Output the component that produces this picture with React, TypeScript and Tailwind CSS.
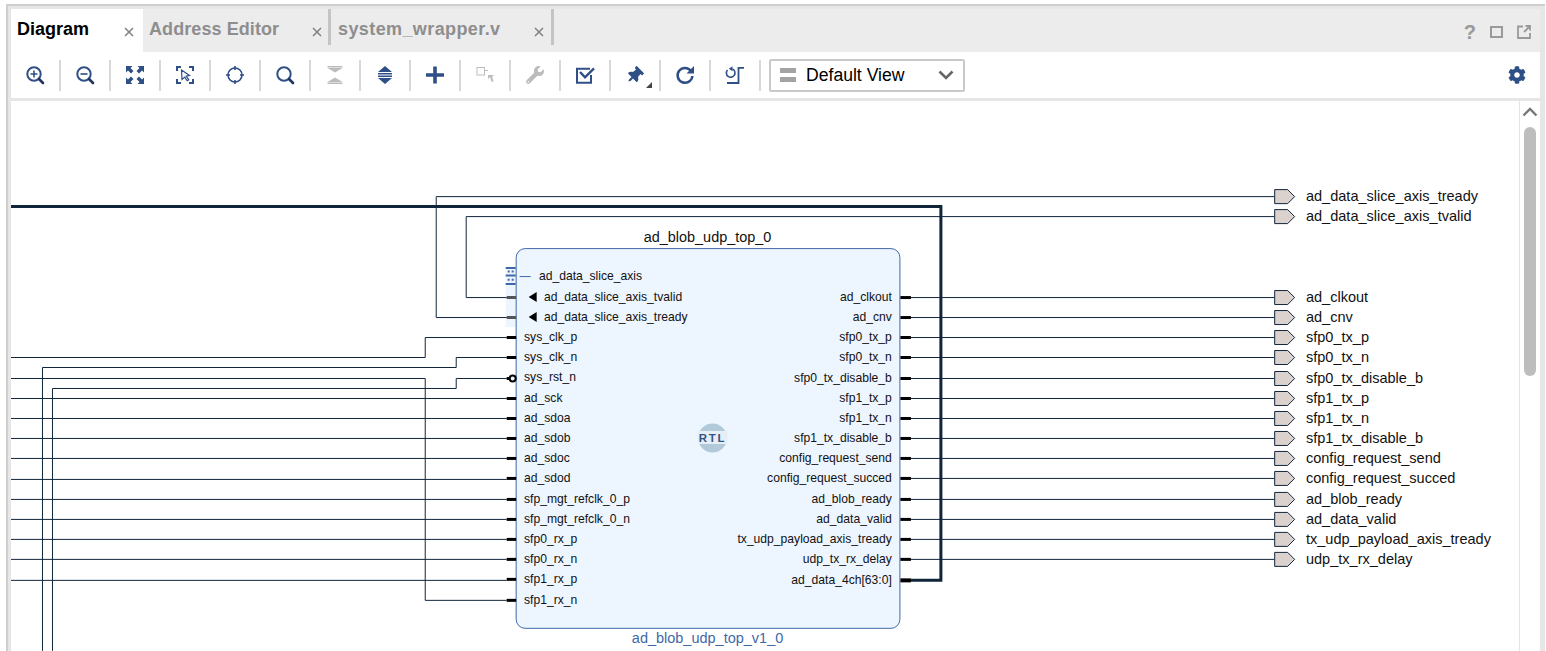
import { FaCog, FaThumbtack, FaWrench } from "react-icons/fa";

const BLUE = "#2f4f87";
const GREY = "#bcbcbc";
const WIRE = "#10243a";

const inputs = [
  { name: "sys_clk_p", y: 337 },
  { name: "sys_clk_n", y: 357 },
  { name: "sys_rst_n", y: 378, dy: -1 },
  { name: "ad_sck", y: 398 },
  { name: "ad_sdoa", y: 418 },
  { name: "ad_sdob", y: 438 },
  { name: "ad_sdoc", y: 458 },
  { name: "ad_sdod", y: 478 },
  { name: "sfp_mgt_refclk_0_p", y: 499 },
  { name: "sfp_mgt_refclk_0_n", y: 519 },
  { name: "sfp0_rx_p", y: 539 },
  { name: "sfp0_rx_n", y: 559 },
  { name: "sfp1_rx_p", y: 579 },
  { name: "sfp1_rx_n", y: 600 },
];

const outputs = [
  { name: "ad_clkout", y: 297 },
  { name: "ad_cnv", y: 317 },
  { name: "sfp0_tx_p", y: 337 },
  { name: "sfp0_tx_n", y: 357 },
  { name: "sfp0_tx_disable_b", y: 378 },
  { name: "sfp1_tx_p", y: 398 },
  { name: "sfp1_tx_n", y: 418 },
  { name: "sfp1_tx_disable_b", y: 438 },
  { name: "config_request_send", y: 458 },
  { name: "config_request_succed", y: 478 },
  { name: "ad_blob_ready", y: 499 },
  { name: "ad_data_valid", y: 519 },
  { name: "tx_udp_payload_axis_tready", y: 539 },
  { name: "udp_tx_rx_delay", y: 559 },
];

// wires on the left of the block, in page pixels
const leftWires = [
  "M11 357.5H425.5V337.5H507",
  "M42.5 651V367.5H456.5V357.5H507",
  "M52.5 651V388.5H456.5V378.5H507",
  "M11 378.5H425.5V600.5H507",
  "M11 398.5H507",
  "M11 418.5H507",
  "M11 438.5H507",
  "M11 458.5H507",
  "M11 479.5H507",
  "M11 499.5H507",
  "M11 519.5H507",
  "M11 539.5H507",
  "M11 559.5H507",
  "M11 580.5H507",
];

function Ico({ children }: { children: React.ReactNode }) {
  return (
    <svg width="20" height="20" viewBox="0 0 20 20" fill="none">
      {children}
    </svg>
  );
}

function Lens({ inner }: { inner?: React.ReactNode }) {
  return (
    <Ico>
      <circle cx="9" cy="9" r="6.7" stroke={BLUE} strokeWidth="2" />
      <path d="M14 14l4 4" stroke="#1e3560" strokeWidth="2.6" strokeLinecap="round" />
      {inner}
    </Ico>
  );
}

const tools: React.ReactNode[] = [
  <Lens inner={<path d="M5.5 9h7M9 5.5v7" stroke={BLUE} strokeWidth="1.6" />} />,
  <Lens inner={<path d="M5.5 9h7" stroke={BLUE} strokeWidth="1.6" />} />,
  <Ico>
    <path d="M1 1h6.500L5.500 3l3 3-2.500 2.500-3-3-2 2zM19 1v6.500l-2-2-3 3L11.500 6l3-3-2-2zM1 19v-6.500l2 2 3-3L8.500 14l-3 3 2 2zM19 19h-6.500l2-2-3-3 2.500-2.500 3 3 2-2z" fill={BLUE} />
  </Ico>,
  <Ico>
    <path d="M6 2H2V6M14 2h4V6M2 14v4H6M14 18h4V14" stroke={BLUE} strokeWidth="2" />
    <path d="M6.500 5l8 5.500-3.300.6 2.600 3.700-1.600 1-2.500-3.700L7 14.500z" fill="white" stroke={BLUE} strokeWidth="1.200" />
  </Ico>,
  <Ico>
    <circle cx="10" cy="10" r="7" stroke={BLUE} strokeWidth="1.600" />
    <path d="M10 1v4M10 15v4M1 10h4M15 10h4" stroke={BLUE} strokeWidth="1.600" />
  </Ico>,
  <Lens />,
  <Ico>
    <path d="M2.500 1.800h15M2.500 18.200h15" stroke={GREY} strokeWidth="1.600" />
    <path d="M2.500 3h15L10 7.500zM2.500 17h15L10 12.500z" fill={GREY} />
  </Ico>,
  <Ico>
    <path d="M10 1l7 6H3zM10 19l7-6H3z" fill={BLUE} />
    <path d="M3 8.800h14M3 11.200h14" stroke={BLUE} strokeWidth="1.600" />
  </Ico>,
  <Ico>
    <path d="M10 1.500v17M1 10h18" stroke={BLUE} strokeWidth="3.600" />
  </Ico>,
  <Ico>
    <rect x="2" y="2.500" width="7.500" height="7.500" stroke={GREY} fill="white" />
    <path d="M9.500 5.500h3.500" stroke={GREY} />
    <path d="M13 10h6l-1.800 1.800 1.300 5h-2l-1.300-4.700L13 14z" fill={GREY} />
  </Ico>,
  <FaWrench size={18} color={GREY} />,
  <Ico>
    <path d="M16 10v7.700H2V3.700h13" stroke={BLUE} strokeWidth="2" />
    <path d="M5 7l5 5.300L19 3.300" stroke={BLUE} strokeWidth="2.400" />
  </Ico>,
  <div className="relative mr-[2px]">
    <FaThumbtack size={17} color={BLUE} style={{ transform: "rotate(45deg)" }} />
    <div className="absolute left-[20px] top-[15px] h-0 w-0 border-b-[6px] border-l-[6px] border-b-[#444] border-l-transparent" />
  </div>,
  <Ico>
    <path d="M16 6A7.400 7.400 0 1 0 17.400 11" stroke={BLUE} strokeWidth="2.500" />
    <path d="M19 1v7.500h-7.500z" fill={BLUE} />
  </Ico>,
  <Ico>
    <path d="M7.500 4A4.300 4.300 0 1 1 2.500 5" stroke={BLUE} strokeWidth="1.600" />
    <path d="M7.500 1.200v5L3.800 3.700z" fill={BLUE} />
    <path d="M19 2.800h-5.500V18H2" stroke={BLUE} strokeWidth="1.800" />
  </Ico>,
];

function Close() {
  return (
    <svg width="10" height="10" viewBox="0 0 10 10" className="mt-[3px] shrink-0">
      <path d="M1 1l8 8M9 1l-8 8" stroke="#808080" strokeWidth="1.500" />
    </svg>
  );
}

function Tabs() {
  return (
    <div className="flex h-[43px] items-stretch bg-[#ececec]">
      <div className="flex w-[132px] items-center justify-between bg-white pl-[6px] pr-[9px] text-[18px] font-bold text-black">
        <span className="mb-[3px]">Diagram</span>
        <Close />
      </div>
      <div className="flex w-[185px] items-center justify-between pl-[6px] pr-[6px] text-[18px] font-bold tracking-[0.08px] text-[#8e8e8e]">
        <span className="mb-[3px]">Address Editor</span>
        <Close />
      </div>
      <div className="mb-[7px] w-[3px] bg-[#c4c4c4]" />
      <div className="flex w-[220px] items-center justify-between pl-[7px] pr-[7px] text-[18px] font-bold tracking-[0.4px] text-[#8e8e8e]">
        <span className="mb-[3px]">system_wrapper.v</span>
        <Close />
      </div>
      <div className="mb-[7px] w-[3px] bg-[#c4c4c4]" />
      <div className="ml-auto flex items-center gap-[14px] pr-[9px] pt-[3px]">
        <span className="text-[20px] font-bold leading-none text-[#999]">?</span>
        <div className="h-[12px] w-[13px] border-2 border-[#999]" />
        <svg width="14" height="14" viewBox="0 0 14 14" fill="none">
          <path d="M6 1.500H1V13h12V8" stroke="#999" strokeWidth="1.800" />
          <path d="M7 7l5-5M8.500 1H13v4.500" stroke="#999" strokeWidth="1.800" />
        </svg>
      </div>
    </div>
  );
}

function Toolbar() {
  return (
    <div className="flex h-[46px] items-center bg-white">
      {tools.map((t, i) => (
        <div key={i} className="flex h-[31px] w-[50px] items-center justify-center border-r-2 border-[#d8d8d8]">
          {t}
        </div>
      ))}
      <div className="ml-[8px] flex h-[33px] w-[196px] items-center rounded-[2px] border-2 border-[#c9c9c9] pl-[9px] pr-[9px]">
        <div className="flex flex-col gap-[4px]">
          <div className="h-[5px] w-[16px] bg-[#a3a3a3]" />
          <div className="h-[5px] w-[16px] bg-[#a3a3a3]" />
        </div>
        <span className="ml-[10px] text-[17.6px] text-black">Default View</span>
        <svg width="16" height="10" viewBox="0 0 16 10" fill="none" className="ml-auto">
          <path d="M1.500 1.500L8 8l6.500-6.500" stroke="#666" strokeWidth="2.600" />
        </svg>
      </div>
      <div className="ml-auto mr-[14px] flex">
        <FaCog size={18} color={BLUE} />
      </div>
    </div>
  );
}

function Port({ name, y }: { name: string; y: number }) {
  return (
    <g>
      <path d={`M1275.500 ${y - 6.5}H1288.500L1295.500 ${y + 0.5}L1288.500 ${y + 7.5}H1275.500Z`} fill="#dbd2ce" stroke={WIRE} />
      <text x="1306.800" y={y + 5} fontSize="14.550" fill="#111">{name}</text>
    </g>
  );
}

function Diagram() {
  return (
    <svg viewBox="11 101 1509 550" width="1509" height="550" className="block">
      <rect x="506" y="268" width="11" height="59" fill="#edf5ff" />
      {leftWires.map((d) => (
        <path key={d} d={d} fill="none" stroke={WIRE} />
      ))}
      <path d="M1275 196.500H436.500V317.500H507M1275 216.500H466.500V297.500H507" fill="none" stroke={WIRE} />
      <path d="M11 206.500H941.500V580.500H911" fill="none" stroke={WIRE} strokeWidth="3" />
      {outputs.map((p) => (
        <path key={p.name} d={`M911 ${p.y + 0.5}H1275`} stroke={WIRE} />
      ))}

      <text x="708" y="242" fontSize="14.450" textAnchor="middle" fill="#111">ad_blob_udp_top_0</text>
      <rect x="516.500" y="248.500" width="384" height="380" rx="9" fill="#edf5ff" stroke="#3f68a8" />
      <text x="708" y="643" fontSize="14.500" textAnchor="middle" fill="#3f68a8">ad_blob_udp_top_v1_0</text>

      {/* bus interface pin */}
      <path d="M506 268h10M506 275.500h10M506 284h10" stroke="#3f68a8" strokeWidth="2" />
      <path d="M508 271.500h2M512 271.500h2M508 279.700h2M512 279.700h2" stroke="#3f68a8" strokeWidth="2" />
      <path d="M520 276.500h11" stroke="#3f68a8" />
      <text x="539.300" y="280" fontSize="12.150" fill="#111">ad_data_slice_axis</text>
      <path d="M537 292v10l-8-5zM537 312v10l-8-5z" fill="#000" />
      <text x="544.300" y="301" fontSize="12.150" fill="#111">ad_data_slice_axis_tvalid</text>
      <text x="544.300" y="321" fontSize="12.150" fill="#111">ad_data_slice_axis_tready</text>
      <path d="M507 297.500h9.500M507 317.500h9.500" stroke="#555" strokeWidth="3" />

      {inputs.map((p) => (
        <g key={p.name}>
          <path d={`M507 ${p.y + 0.5}h9.500`} stroke="#000" strokeWidth="3" />
          <text x="524.400" y={p.y + 4 + (p.dy ?? 0)} fontSize="12.150" fill="#111">{p.name}</text>
        </g>
      ))}
      <circle cx="513" cy="378.500" r="3" fill="#edf5ff" stroke="#000" strokeWidth="2" />

      {outputs.map((p) => (
        <g key={p.name}>
          <path d={`M901 ${p.y + 0.5}h10.500`} stroke="#000" strokeWidth="3" />
          <text x="892.400" y={p.y + 4} fontSize="12.150" textAnchor="end" fill="#111">{p.name}</text>
        </g>
      ))}
      <path d="M901 580.500h10.500" stroke="#000" strokeWidth="4" />
      <text x="892.400" y="584" fontSize="12.150" textAnchor="end" fill="#111">ad_data_4ch[63:0]</text>

      {/* RTL badge */}
      <circle cx="713" cy="438" r="14.500" fill="#b1c9d9" />
      <rect x="698" y="431" width="30" height="13" fill="#e6eff8" />
      <text x="713" y="442" fontSize="11.500" fontWeight="700" letterSpacing="1.800" textAnchor="middle" fill="#33557f">RTL</text>

      <Port name="ad_data_slice_axis_tready" y={196} />
      <Port name="ad_data_slice_axis_tvalid" y={216} />
      {outputs.map((p) => (
        <Port key={p.name} name={p.name} y={p.y} />
      ))}
    </svg>
  );
}

function Scrollbar() {
  return (
    <div className="flex w-[21px] flex-col items-center border-l border-[#e4e4e4] bg-white">
      <svg width="16" height="10" viewBox="0 0 16 10" fill="none" className="mt-[6px]">
        <path d="M1.500 8.500L8 2l6.500 6.500" stroke="#777" strokeWidth="2.400" />
      </svg>
      <div className="mt-[10px] h-[249px] w-[12px] rounded-full bg-[#bdbdbd]" />
    </div>
  );
}

export default function App() {
  return (
    <div className="h-[651px] w-[1546px] overflow-hidden bg-white pl-[6px] pt-[4px] font-['Liberation_Sans',Arial,sans-serif]">
      <div className="h-[647px] w-[1539px] border-l-2 border-t-2 border-[#cfcfcf] bg-[#e6e6e6] pl-[3px] pr-[5px] pt-[3px]">
        <Tabs />
        <Toolbar />
        <div className="mt-[3px] flex bg-white">
          <Diagram />
          <Scrollbar />
        </div>
      </div>
    </div>
  );
}
